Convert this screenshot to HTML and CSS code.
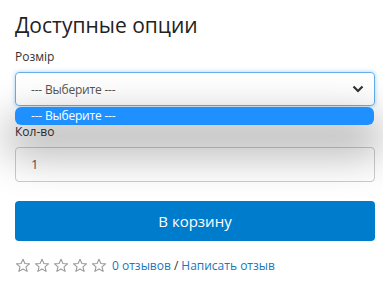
FILE: index.html
```html
<!DOCTYPE html>
<html lang="ru">
<head>
  <meta charset="UTF-8" />
  <title>Доступные опции</title>
  <link rel="stylesheet" href="styles.css">
</head>
<body>

  <div class="options">
    <h3>Доступные опции</h3>

    <div class="field">
      <label>Розмір</label>
      <div class="select-wrap">
        <div class="select">
          <span>--- Выберите ---</span>
          <svg class="chevron" width="12" height="8" viewBox="0 0 12 8">
            <path d="M1.5 1.5 L6 6 L10.5 1.5" fill="none" stroke="#333" stroke-width="2.2"/>
          </svg>
        </div>
        <div class="dropdown">
          <div class="option active">--- Выберите ---</div>
        </div>
      </div>
    </div>

    <div class="field">
      <label>Кол-во</label>
      <div class="input">1</div>
    </div>

    <button class="cart-btn">В корзину</button>

    <div class="rating">
      <span class="stars">
        <svg viewBox="0 0 16 16"><path d="M8 1.3l1.9 4.2 4.6.4-3.5 3 1.1 4.5L8 11l-4.1 2.4 1.1-4.5-3.5-3 4.6-.4z"/></svg>
        <svg viewBox="0 0 16 16"><path d="M8 1.3l1.9 4.2 4.6.4-3.5 3 1.1 4.5L8 11l-4.1 2.4 1.1-4.5-3.5-3 4.6-.4z"/></svg>
        <svg viewBox="0 0 16 16"><path d="M8 1.3l1.9 4.2 4.6.4-3.5 3 1.1 4.5L8 11l-4.1 2.4 1.1-4.5-3.5-3 4.6-.4z"/></svg>
        <svg viewBox="0 0 16 16"><path d="M8 1.3l1.9 4.2 4.6.4-3.5 3 1.1 4.5L8 11l-4.1 2.4 1.1-4.5-3.5-3 4.6-.4z"/></svg>
        <svg viewBox="0 0 16 16"><path d="M8 1.3l1.9 4.2 4.6.4-3.5 3 1.1 4.5L8 11l-4.1 2.4 1.1-4.5-3.5-3 4.6-.4z"/></svg>
      </span>
      <a href="#">0 отзывов</a> / <a href="#">Написать отзыв</a>
    </div>
  </div>

</body>
</html>
```

FILE: styles.css
```css
body {
  margin: 0;
  font-family: "Open Sans", Arial, sans-serif;
  background: #fff;
  color: #333;
}

.options {
  padding: 8px 8px 0 15px;
}

h3 {
  margin: 0 0 6px;
  font-size: 21px;
  font-weight: 400;
  line-height: 34px;
  color: #222;
}

.field {
  margin-bottom: 17px;
}

label {
  display: block;
  font-size: 12px;
  line-height: 18px;
  margin-bottom: 6px;
  color: #333;
}

.select-wrap {
  position: relative;
}

.select {
  height: 32px;
  border: 1px solid #66afe9;
  border-radius: 4px;
  box-shadow: 0 0 4px rgba(102, 175, 233, 0.6);
  display: flex;
  align-items: center;
  justify-content: space-between;
  padding: 0 10px 0 15px;
  font-size: 12px;
  letter-spacing: -0.2px;
  color: #555;
}

.chevron {
  display: block;
}

.dropdown {
  position: absolute;
  left: 0;
  right: 1px;
  top: 35px;
  border-radius: 6px;
  box-shadow: 0 20px 42px 10px rgba(0, 0, 0, 0.3);
}

.option {
  height: 18px;
  line-height: 18px;
  padding-left: 16px;
  font-size: 12px;
  letter-spacing: -0.2px;
  border-radius: 6px;
}

.option.active {
  background: #1e90ff;
  color: #fff;
}

.input {
  height: 33px;
  border: 1px solid #ccc;
  border-radius: 4px;
  line-height: 33px;
  padding-left: 15px;
  font-size: 13px;
  color: #555;
}

.cart-btn {
  display: block;
  width: 100%;
  height: 40px;
  margin-top: 19px;
  border: none;
  border-radius: 4px;
  background: #007ccc;
  color: #fff;
  font-family: inherit;
  font-size: 15px;
}

.rating {
  margin-top: 16px;
  font-size: 12px;
  color: #333;
  display: flex;
  align-items: center;
}

.stars {
  display: flex;
  gap: 3px;
  margin-right: 2px;
}

.stars svg {
  width: 16px;
  height: 16px;
}

.stars path {
  fill: none;
  stroke: #999;
  stroke-width: 1.1;
  stroke-linejoin: round;
}

.rating a {
  color: #1b75bb;
  text-decoration: none;
  margin: 0 3px;
}
```
